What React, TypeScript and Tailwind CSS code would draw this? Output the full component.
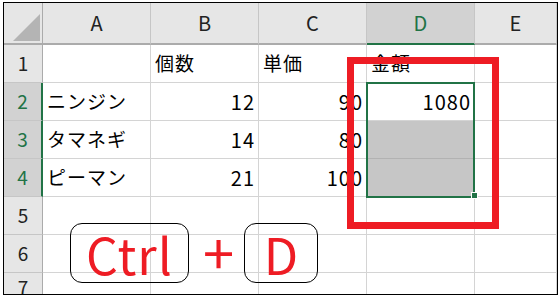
import React from 'react';

const FONT = { fontFamily: '"Noto Sans CJK JP", "Noto Sans", sans-serif' };

const COLS = ['A', 'B', 'C', 'D', 'E'];

type Row = { n: number; cells: (string | number)[] };

const ROWS: Row[] = [
  { n: 1, cells: ['', '個数', '単価', '金額', ''] },
  { n: 2, cells: ['ニンジン', 12, 90, 1080, ''] },
  { n: 3, cells: ['タマネギ', 14, 80, '', ''] },
  { n: 4, cells: ['ピーマン', 21, 100, '', ''] },
  { n: 5, cells: ['', '', '', '', ''] },
  { n: 6, cells: ['', '', '', '', ''] },
  { n: 7, cells: ['', '', '', '', ''] },
];

const selectedRows = [2, 3, 4];

function ColHeader({ label }: { label: string }) {
  const active = label === 'D';
  return (
    <div
      className={
        'flex items-center justify-center border-r border-r-[#c6c6c6] border-b-2 text-[20px] ' +
        (active ? 'bg-[#d2d2d2] border-b-[#217346] text-[#217346]' : 'bg-[#e6e6e6] border-b-[#ababab] text-[#222]')
      }
    >
      {label}
    </div>
  );
}

function RowHeader({ n }: { n: number }) {
  const active = selectedRows.includes(n);
  return (
    <div
      className={
        'flex items-center justify-center border-b border-b-[#c6c6c6] text-[19px] ' +
        (active
          ? 'bg-[#d2d2d2] border-r-2 border-r-[#217346] text-[#217346]'
          : 'bg-[#e6e6e6] border-r border-r-[#ababab] text-[#222]')
      }
    >
      {n}
    </div>
  );
}

function Cell({ value, row, col }: { value: string | number; row: number; col: number }) {
  const filled = col === 3 && (row === 3 || row === 4);
  const isNum = typeof value === 'number';
  return (
    <div
      className={
        'flex items-center text-black border-r border-b ' +
        (isNum ? 'justify-end pr-[3px] text-[20px] tracking-[1px] ' : 'justify-start pl-1 text-[19px] tracking-[1px] ') +
        (filled ? 'bg-[#c6c6c6] border-[#b2b2b2]' : 'bg-white border-[#d4d4d4]')
      }
    >
      {value}
    </div>
  );
}

function KeyCap({ children, className }: { children: React.ReactNode; className: string }) {
  return (
    <div
      className={
        'absolute flex items-center justify-center rounded-[12px] border border-black text-[50px] leading-none text-[#ee1c24] ' +
        className
      }
    >
      {children}
    </div>
  );
}

export default function App() {
  return (
    <div className="w-[559px] h-[297px] bg-white pl-[3px] pt-[2px]" style={FONT}>
      <div className="relative w-[555px] h-[293px] border border-black overflow-hidden">
        <div className="grid grid-cols-[39px_108px_108px_108px_108px_1fr] grid-rows-[42px_38px_38px_38px_38px_38px_38px_1fr] h-full">
          {/* corner cell */}
          <div className="flex items-end justify-end pr-[2px] pb-[2px] bg-[#e6e6e6] border-r border-r-[#ababab] border-b-2 border-b-[#ababab]">
            <svg width="27" height="27" viewBox="0 0 27 27">
              <polygon points="27,0 27,27 0,27" fill="#b4b4b4" />
            </svg>
          </div>
          {COLS.map((c) => (
            <ColHeader key={c} label={c} />
          ))}
          {ROWS.map((r) => (
            <React.Fragment key={r.n}>
              <RowHeader n={r.n} />
              {r.cells.map((v, i) => (
                <Cell key={i} value={v} row={r.n} col={i} />
              ))}
            </React.Fragment>
          ))}
        </div>

        {/* selection D2:D4 with fill handle */}
        <div className="absolute left-[362px] top-[79px] w-[109px] h-[116px] border-2 border-[#217346]" />
        <div className="absolute left-[467px] top-[189px] w-[7px] h-[7px] bg-[#217346] border border-white" />

        {/* red highlight frame */}
        <div className="absolute left-[343px] top-[54px] w-[152px] h-[172px] border-[7px] border-[#ee1c24]" />

        {/* shortcut keys */}
        <KeyCap className="left-[66px] top-[220px] w-[119px] h-[60px] tracking-[1px]">Ctrl</KeyCap>
        <div className="absolute left-[199px] top-[220px] text-[56px] leading-none text-[#ee1c24]">+</div>
        <KeyCap className="left-[240px] top-[220px] w-[74px] h-[60px]">D</KeyCap>
      </div>
    </div>
  );
}
